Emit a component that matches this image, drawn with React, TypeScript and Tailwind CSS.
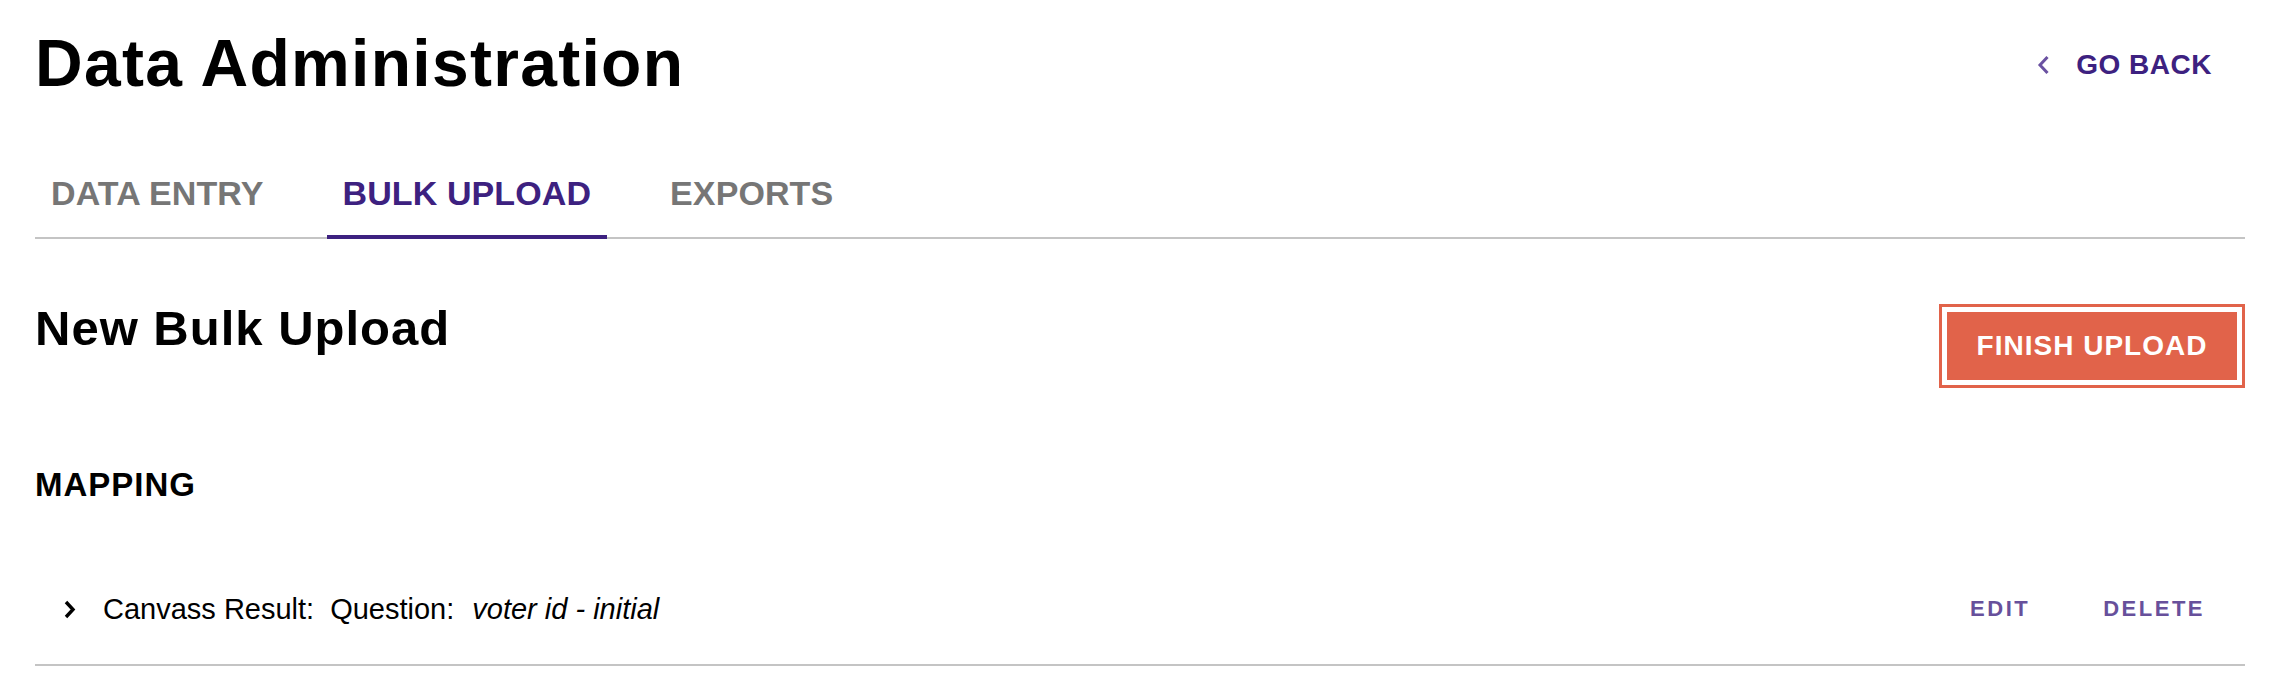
import React from "react";

const font = { fontFamily: '"Liberation Sans", Arial, sans-serif' };

function ChevronLeft() {
  return (
    <svg width="13" height="20" viewBox="0 0 13 20" fill="none">
      <path d="M10.5 2 L3 10 L10.5 18" stroke="#6a51a1" strokeWidth="3" strokeLinecap="butt" strokeLinejoin="miter" />
    </svg>
  );
}

function ChevronRight() {
  return (
    <svg width="12" height="19" viewBox="0 0 12 19" fill="none">
      <path d="M2 2 L9 9.5 L2 17" stroke="#000" strokeWidth="3.4" strokeLinecap="butt" strokeLinejoin="miter" />
    </svg>
  );
}

export default function App() {
  const tabs = [
    { label: "DATA ENTRY", active: false },
    { label: "BULK UPLOAD", active: true },
    { label: "EXPORTS", active: false },
  ];
  return (
    <div className="min-h-screen bg-white px-[35px] pt-[30px] text-black" style={font}>
      <div className="flex items-start justify-between">
        <h1 className="text-[66px] font-bold leading-none tracking-[1.3px]">Data Administration</h1>
        <button className="mr-[33px] mt-[21px] flex items-center gap-[26px] text-[28px] font-bold leading-none tracking-[0.5px] text-[#3d2180]">
          <ChevronLeft />
          <span>GO BACK</span>
        </button>
      </div>

      <div className="mt-[80px] flex gap-[47px] border-b-2 border-[#c4c4c4]">
        {tabs.map((t) => (
          <div
            key={t.label}
            className={
              t.active
                ? "-mb-[2px] border-b-4 border-[#3d2180] px-[16px] pb-[25px] text-[34px] font-bold leading-none tracking-[0.1px] text-[#3d2180]"
                : "-mb-[2px] border-b-4 border-transparent px-[16px] pb-[25px] text-[34px] font-bold leading-none tracking-[0.1px] text-[#767676]"
            }
          >
            {t.label}
          </div>
        ))}
      </div>

      <div className="mt-[65px] flex items-start justify-between">
        <h2 className="text-[49px] font-bold leading-none tracking-[1px]">New Bulk Upload</h2>
        <div className="border-[3px] border-[#e1634a] p-[5px]">
          <button className="flex h-[68px] w-[290px] items-center justify-center bg-[#e1634a] text-[28px] font-bold leading-none tracking-[1px] text-white">
            FINISH UPLOAD
          </button>
        </div>
      </div>

      <h3 className="mt-[80px] text-[33px] font-bold leading-none tracking-[1px]">MAPPING</h3>

      <div className="mt-[53px] flex h-[112px] items-center justify-between border-b-2 border-[#c4c4c4] pl-[29px] pr-[40px]">
        <div className="flex items-center text-[29px] leading-none">
          <ChevronRight />
          <span className="ml-[27px]">Canvass Result:</span>
          <span className="ml-[16px]">Question:</span>
          <span className="ml-[18px] italic">voter id - initial</span>
        </div>
        <div className="flex items-center gap-[73px] text-[22px] font-bold leading-none tracking-[2.5px] text-[#67509b]">
          <span>EDIT</span>
          <span>DELETE</span>
        </div>
      </div>
    </div>
  );
}
